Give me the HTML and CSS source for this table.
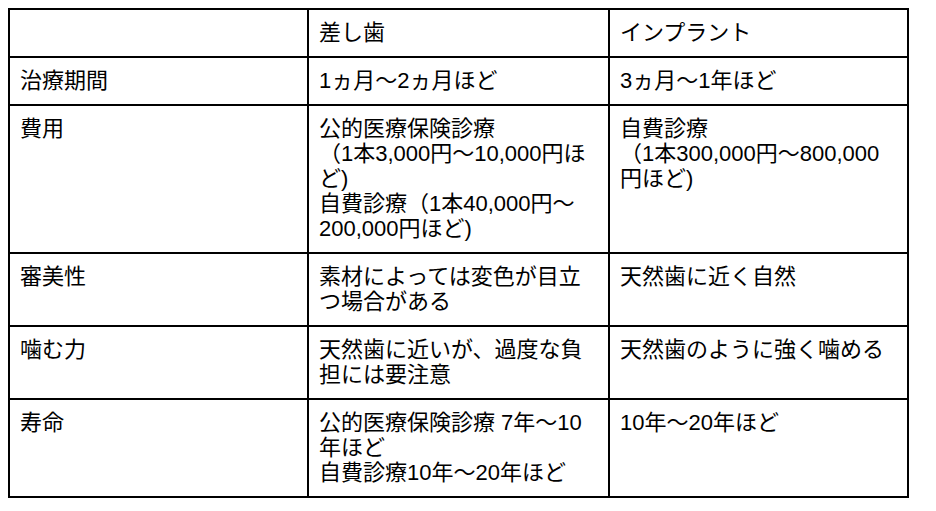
FILE: index.html
```html
<!DOCTYPE html>
<html lang="ja">
<head>
<meta charset="utf-8">
<title>差し歯とインプラントの比較</title>
<link rel="stylesheet" href="styles.css">
</head>
<body>
<div class="compare">
  <div class="cell"></div>
  <div class="cell">差し歯</div>
  <div class="cell">インプラント</div>

  <div class="cell">治療期間</div>
  <div class="cell">1ヵ月～2ヵ月ほど</div>
  <div class="cell">3ヵ月～1年ほど</div>

  <div class="cell">費用</div>
  <div class="cell">公的医療保険診療<br>（1本3,000円～10,000円ほど)<br>自費診療（1本40,000円～200,000円ほど)</div>
  <div class="cell">自費診療<br>（1本300,000円～800,000円ほど)</div>

  <div class="cell">審美性</div>
  <div class="cell">素材によっては変色が目立つ場合がある</div>
  <div class="cell">天然歯に近く自然</div>

  <div class="cell">噛む力</div>
  <div class="cell">天然歯に近いが、過度な負担には要注意</div>
  <div class="cell">天然歯のように強く噛める</div>

  <div class="cell">寿命</div>
  <div class="cell">公的医療保険診療 7年～10年ほど<br>自費診療10年～20年ほど</div>
  <div class="cell">10年～20年ほど</div>
</div>
</body>
</html>
```

FILE: styles.css
```css
html, body {
  background: #ffffff;
}
body {
  margin: 8px;
  font-family: "Liberation Sans", "Noto Sans CJK JP", sans-serif;
  font-size: 22px;
  line-height: 25px;
  color: #000000;
}
.compare {
  display: grid;
  grid-template-columns: 299px 301px 299px;
  width: 901px;
  box-sizing: border-box;
  border-left: 2px solid #000;
  border-top: 2px solid #000;
}
.cell {
  box-sizing: border-box;
  border-right: 2px solid #000;
  border-bottom: 2px solid #000;
  padding: 10px 10px 11px 10px;
  min-height: 48px;
  line-break: normal;
}
```
